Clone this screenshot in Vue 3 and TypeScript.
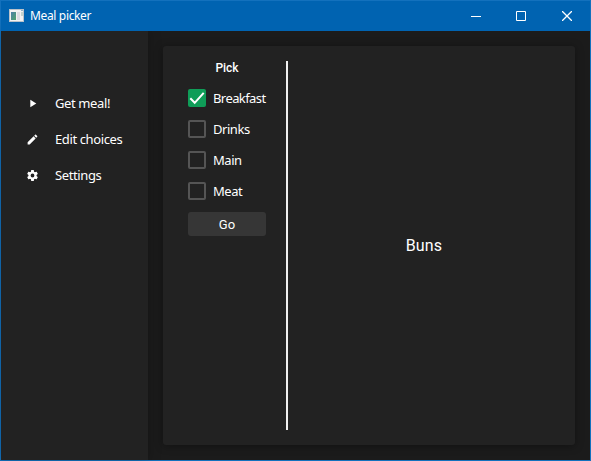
<script setup lang="ts">
import { ref } from 'vue'

interface Choice {
  label: string
  checked: boolean
  cls: string
}

const navItems = [
  { label: 'Get meal!', cls: 'get', icon: 'M8 5.14v14l11-7-11-7z' },
  {
    label: 'Edit choices',
    cls: 'edit',
    icon: 'M20.71 7.04c.39-.39.39-1.04 0-1.41l-2.34-2.34c-.37-.39-1.02-.39-1.41 0l-1.84 1.83 3.75 3.75M3 17.25V21h3.75L17.81 9.93l-3.75-3.75L3 17.25z',
  },
  {
    label: 'Settings',
    cls: 'settings',
    icon: 'M12 15.5A3.5 3.5 0 0 1 8.5 12 3.5 3.5 0 0 1 12 8.5a3.5 3.5 0 0 1 3.5 3.5 3.5 3.5 0 0 1-3.5 3.5m7.43-2.53c.04-.32.07-.64.07-.97s-.03-.66-.07-1l2.11-1.63c.19-.15.24-.42.12-.64l-2-3.46c-.12-.22-.39-.31-.61-.22l-2.49 1c-.52-.39-1.06-.73-1.69-.98l-.37-2.65A.506.506 0 0 0 14 2h-4c-.25 0-.46.18-.5.42l-.37 2.65c-.63.25-1.17.59-1.69.98l-2.49-1c-.22-.09-.49 0-.61.22l-2 3.46c-.13.22-.07.49.12.64L4.57 11c-.04.34-.07.67-.07 1s.03.65.07.97l-2.11 1.66c-.19.15-.25.42-.12.64l2 3.46c.12.22.39.3.61.22l2.49-1.01c.52.4 1.06.74 1.69.99l.37 2.65c.04.24.25.42.5.42h4c.25 0 .46-.18.5-.42l.37-2.65c.63-.26 1.17-.59 1.69-.99l2.49 1.01c.22.08.49 0 .61-.22l2-3.46c.12-.22.07-.49-.12-.64l-2.11-1.66z',
  },
]

const choices = ref<Choice[]>([
  { label: 'Breakfast', checked: true, cls: 'breakfast' },
  { label: 'Drinks', checked: false, cls: 'drinks' },
  { label: 'Main', checked: false, cls: 'main' },
  { label: 'Meat', checked: false, cls: 'meat' },
])
</script>

<template>
  <div class="window">
    <header class="titlebar">
      <svg class="app-icon" width="15" height="13" viewBox="0 0 15 13">
        <defs>
          <linearGradient id="pane" x1="0" y1="0" x2="1" y2="1">
            <stop offset="0" stop-color="#4c7fa8" />
            <stop offset="1" stop-color="#4fa36b" />
          </linearGradient>
        </defs>
        <rect width="15" height="13" fill="#b9c2ca" />
        <rect x="1" y="1" width="13" height="11" fill="#f2f2f2" />
        <rect x="2" y="3" width="5" height="8" fill="url(#pane)" />
        <rect x="8" y="3" width="3" height="8" fill="#dcdce2" />
        <rect x="12" y="3" width="2" height="4" fill="#c3d3cf" />
        <rect x="12" y="1" width="2" height="1" fill="#8fb0c8" />
      </svg>
      <span class="title">Meal picker</span>
      <div class="controls">
        <span class="control"><svg width="10" height="10"><path d="M0 5.5h10" /></svg></span>
        <span class="control"><svg width="10" height="10"><path d="M.5.5h9v9h-9z" /></svg></span>
        <span class="control"><svg width="10" height="10"><path d="M0 0l10 10M10 0L0 10" /></svg></span>
      </div>
    </header>
    <div class="body">
      <nav class="sidebar">
        <a v-for="item in navItems" :key="item.label" class="nav-item">
          <svg width="13" height="13" viewBox="0 0 24 24"><path :d="item.icon" /></svg>
          <span :class="item.cls">{{ item.label }}</span>
        </a>
      </nav>
      <main class="content">
        <section class="card">
          <div class="picker">
            <h2 class="heading">Pick</h2>
            <div v-for="choice in choices" :key="choice.label" class="choice" @click="choice.checked = !choice.checked">
              <span class="box" :class="{ checked: choice.checked }">
                <svg v-if="choice.checked" width="18" height="18"><path d="M2.3 9.3l4.4 4.5L15.7 3.8" /></svg>
              </span>
              <span :class="choice.cls">{{ choice.label }}</span>
            </div>
            <button class="go">Go</button>
          </div>
          <div class="divider"></div>
          <div class="result"><span>Buns</span></div>
        </section>
      </main>
    </div>
  </div>
</template>

<style>
body {
  margin: 0;
  overflow: hidden;
}
</style>

<style scoped>
.window {
  box-sizing: border-box;
  width: 591px;
  height: 461px;
  display: flex;
  flex-direction: column;
  border: 1px solid #1371bd;
  background: #1b1b1b;
  color: #fff;
  font: 13px/18px "Noto Sans", "Open Sans", sans-serif;
}
.titlebar {
  position: relative;
  z-index: 1;
  height: 30px;
  flex: none;
  display: flex;
  align-items: center;
  padding-left: 8px;
  background: #0063b1;
}
.app-icon {
  margin-top: -1px;
}
.title {
  margin-left: 6px;
  font-size: 12px;
  letter-spacing: -0.35px;
}
.controls {
  display: flex;
  margin-left: auto;
}
.control {
  width: 46px;
  height: 30px;
  display: flex;
  align-items: center;
  justify-content: center;
}
.control:first-child {
  width: 44px;
}
.control svg {
  fill: none;
  stroke: #fff;
  stroke-width: 1;
}
.control:last-child svg {
  stroke-width: 1.3;
}
.body {
  flex: 1;
  display: flex;
  min-height: 0;
}
.sidebar {
  width: 147px;
  flex: none;
  box-sizing: border-box;
  padding-top: 54px;
  background: #222;
  box-shadow: 0 0 12px rgba(0, 0, 0, 0.25);
}
.nav-item {
  height: 36px;
  display: flex;
  align-items: center;
  gap: 16px;
  padding-left: 25px;
  white-space: nowrap;
  letter-spacing: -0.38px;
}
.nav-item svg {
  fill: #fff;
}
.content {
  flex: 1;
  display: flex;
  padding: 15px;
}
.card {
  flex: 1;
  display: flex;
  border-radius: 3px;
  background: #222;
  box-shadow: 0 1px 8px rgba(0, 0, 0, 0.35);
}
.picker {
  width: 78px;
  padding: 13px 20px 0 25px;
}
.heading {
  margin: 0 0 12px;
  font: 500 12px/18px Roboto, sans-serif;
  text-align: center;
}
.choice {
  height: 18px;
  display: flex;
  align-items: center;
  gap: 7px;
  margin-bottom: 13px;
  white-space: nowrap;
  letter-spacing: -0.45px;
}
.breakfast {
  letter-spacing: -0.58px;
}
.box {
  flex: none;
  box-sizing: border-box;
  width: 18px;
  height: 18px;
  border: 2px solid #555;
  border-radius: 2px;
}
.box.checked {
  border: 0;
  background: #0f9d58;
}
.box svg {
  display: block;
  fill: none;
  stroke: #fff;
  stroke-width: 2;
}
.go {
  display: block;
  width: 78px;
  height: 24px;
  margin: -1px 0 0;
  padding: 1px 0 0;
  border: 0;
  border-radius: 3px;
  background: #363636;
  color: #fff;
  font: 13px/18px Roboto, sans-serif;
}
.divider {
  width: 2px;
  margin: 15px 0;
  background: #f0f0f0;
}
.result {
  flex: 1;
  display: flex;
  align-items: center;
  justify-content: center;
  padding-right: 15px;
  font: 400 16px/20px Roboto, sans-serif;
  letter-spacing: 0.15px;
}
</style>
